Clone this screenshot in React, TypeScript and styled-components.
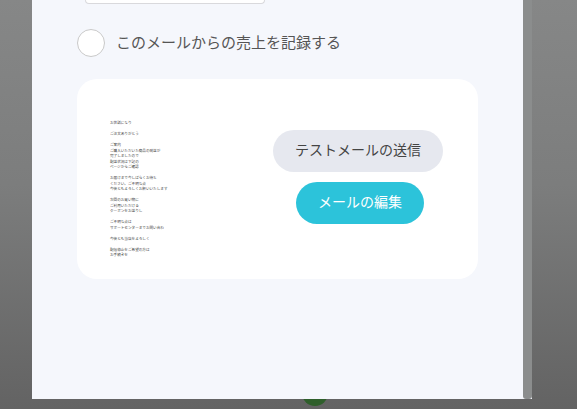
import React from 'react';
import styled, { createGlobalStyle } from 'styled-components';

const GlobalStyle = createGlobalStyle`
  html, body {
    margin: 0;
    padding: 0;
    height: 100%;
    overflow: hidden;
    background: #666;
  }
  * {
    box-sizing: border-box;
  }
`;

const Backdrop = styled.div`
  position: relative;
  width: 577px;
  height: 409px;
  overflow: hidden;
  padding-left: 32px;
  background: linear-gradient(180deg, #868787 0%, #7c7d7d 45%, #636363 100%);
  font-family: 'Noto Sans CJK JP', 'Liberation Sans', sans-serif;
`;

const GreenDot = styled.div`
  position: absolute;
  left: 302px;
  top: 380px;
  width: 26px;
  height: 26px;
  border-radius: 50%;
  background: #2f5f2b;
`;

const Sheet = styled.div`
  position: relative;
  display: flex;
  width: 500px;
  height: 399px;
  background: #f5f7fc;
`;

const Panel = styled.div`
  width: 491px;
  padding: 0 45px;
  background: #f5f7fc;
`;

const ScrollTrack = styled.div`
  width: 9px;
  background: #8b8d8d;
  border-radius: 0 0 3px 3px;
`;

const CutInput = styled.div`
  width: 180px;
  height: 4px;
  margin-left: 8px;
  background: #fff;
  border: 1px solid #d9d9dc;
  border-top: none;
  border-radius: 0 0 16px 16px;
`;

const CheckRow = styled.label`
  display: flex;
  align-items: center;
  gap: 12px;
  margin-top: 25px;
  height: 28px;
  font-size: 15px;
  color: #555;
`;

const Circle = styled.span`
  width: 28px;
  height: 28px;
  border-radius: 50%;
  background: #fff;
  border: 1px solid #c9c9c9;
`;

const CheckLabel = styled.span`
  margin-left: -1px;
  padding-bottom: 4px;
`;

const Card = styled.div`
  display: flex;
  justify-content: space-between;
  align-items: center;
  height: 200px;
  margin-top: 22px;
  padding: 0 35px 0 33px;
  background: #fff;
  border-radius: 20px;
`;

const Preview = styled.div`
  width: 160px;
  height: 200px;
  padding-top: 41px;
`;

const PreviewText = styled.div`
  font-size: 3.6px;
  line-height: 5.5px;
  color: #444;
  white-space: nowrap;
`;

const PreviewPara = styled.p`
  margin: 0 0 5.5px;
`;

const Actions = styled.div`
  display: flex;
  flex-direction: column;
  align-items: center;
  gap: 10px;
  width: 170px;
  padding-bottom: 4px;
`;

const Pill = styled.button<{ $primary?: boolean }>`
  height: 42px;
  width: ${(p) => (p.$primary ? '128px' : '170px')};
  margin-left: ${(p) => (p.$primary ? '4px' : '0')};
  padding: 0 0 5px;
  border: none;
  border-radius: 21px;
  font-family: inherit;
  font-size: 14px;
  font-weight: 400;
  color: ${(p) => (p.$primary ? '#fff' : '#444')};
  background: ${(p) => (p.$primary ? '#2cc3da' : '#e6e8ef')};
`;

const paragraphs = [
  ['お世話になり'],
  ['ご注文ありがとう'],
  [
    'ご案内',
    'ご購入いただいた商品の発送が',
    '完了しましたので',
    '配送状況は下記の',
    'ページからご確認',
  ],
  [
    'お届けまで今しばらくお待ち',
    'ください。ご不明な点',
    '今後ともよろしくお願いいたします',
  ],
  [
    '次回のお買い物に',
    'ご利用いただける',
    'クーポンをお送りし',
  ],
  ['ご不明な点は', 'サポートセンターまでお問い合わ'],
  ['今後とも当店をよろしく'],
  ['配信停止をご希望の方は', 'お手続きを'],
];

const App: React.FC = () => {
  return (
    <>
      <GlobalStyle />
      <Backdrop>
        <GreenDot />
        <Sheet>
          <Panel>
            <CutInput />
            <CheckRow>
              <Circle />
              <CheckLabel>このメールからの売上を記録する</CheckLabel>
            </CheckRow>
            <Card>
              <Preview>
                <PreviewText>
                  {paragraphs.map((lines, i) => (
                    <PreviewPara key={i}>
                      {lines.map((line, j) => (
                        <React.Fragment key={j}>
                          {line}
                          <br />
                        </React.Fragment>
                      ))}
                    </PreviewPara>
                  ))}
                </PreviewText>
              </Preview>
              <Actions>
                <Pill>テストメールの送信</Pill>
                <Pill $primary>メールの編集</Pill>
              </Actions>
            </Card>
          </Panel>
          <ScrollTrack />
        </Sheet>
      </Backdrop>
    </>
  );
};

export default App;
